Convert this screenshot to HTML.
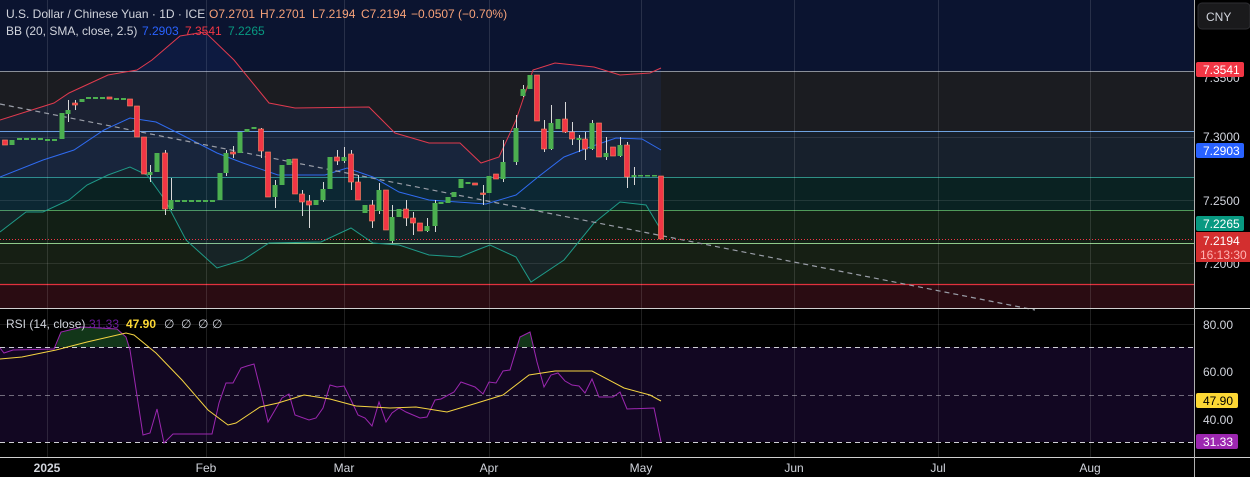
<!DOCTYPE html>
<html><head><meta charset="utf-8"><style>
html,body{margin:0;padding:0;background:#000;width:1250px;height:477px;overflow:hidden}
svg{display:block;font-family:"Liberation Sans",sans-serif}
</style></head><body>
<svg width="1250" height="477" viewBox="0 0 1250 477" xmlns="http://www.w3.org/2000/svg">
<rect width="1250" height="477" fill="#000"/>
<!-- main pane bands -->
<rect x="0" y="0" width="1195" height="71" fill="#0b1430"/>
<rect x="0" y="71" width="1195" height="60" fill="#1b1c21"/>
<rect x="0" y="131" width="1195" height="46" fill="#17202c"/>
<rect x="0" y="177" width="1195" height="33" fill="#0a2222"/>
<rect x="0" y="210" width="1195" height="33" fill="#121f15"/>
<rect x="0" y="243" width="1195" height="41" fill="#161f14"/>
<rect x="0" y="284" width="1195" height="24" fill="#2a0c12"/>
<line x1="0" y1="71.5" x2="1195" y2="71.5" stroke="#8a8f99" stroke-width="1"/>
<line x1="0" y1="131.5" x2="1195" y2="131.5" stroke="#6fa3e0" stroke-width="1"/>
<line x1="0" y1="177.5" x2="1195" y2="177.5" stroke="#2f8f85" stroke-width="1"/>
<line x1="0" y1="210.5" x2="1195" y2="210.5" stroke="#4f9a5a" stroke-width="1"/>
<line x1="0" y1="243.5" x2="1195" y2="243.5" stroke="#8fc98a" stroke-width="1"/>
<line x1="0" y1="284.5" x2="1195" y2="284.5" stroke="#e0313d" stroke-width="1.2"/>
<!-- horizontal grid -->
<g stroke="#ffffff" stroke-opacity="0.1">
<line x1="0" y1="137.5" x2="1195" y2="137.5"/><line x1="0" y1="200.5" x2="1195" y2="200.5"/><line x1="0" y1="263.5" x2="1195" y2="263.5"/>
<line x1="0" y1="371.5" x2="1195" y2="371.5"/><line x1="0" y1="419.5" x2="1195" y2="419.5"/><line x1="0" y1="324.5" x2="1195" y2="324.5"/>
</g>
<!-- RSI band -->
<rect x="0" y="347" width="1195" height="95" fill="#120722"/>
<g stroke="#cfcfd6" stroke-dasharray="5,4" stroke-width="1">
<line x1="0" y1="347.5" x2="1195" y2="347.5"/><line x1="0" y1="395.5" x2="1195" y2="395.5" stroke-opacity="0.5"/><line x1="0" y1="442.5" x2="1195" y2="442.5"/>
</g>
<!-- vertical grid -->
<g stroke="#ffffff" stroke-opacity="0.12">
<line x1="47.5" y1="0" x2="47.5" y2="457"/><line x1="206.5" y1="0" x2="206.5" y2="457"/><line x1="344.5" y1="0" x2="344.5" y2="457"/>
<line x1="489.5" y1="0" x2="489.5" y2="457"/><line x1="641.5" y1="0" x2="641.5" y2="457"/><line x1="794.5" y1="0" x2="794.5" y2="457"/>
<line x1="938.5" y1="0" x2="938.5" y2="457"/><line x1="1090.5" y1="0" x2="1090.5" y2="457"/>
</g>
<!-- BB fill -->
<polygon fill="#2962ff" fill-opacity="0.08" points="0,120 54,103 69,93 108,75 137,70 152,60 180,36 205,32 234,60 269,103 295,108 369,107 395,133 429,143 460,143 481,163 499,157 516,120 533,70 555,63 594,67 620,75 650,73 661,68 661,230 646,205 620,202 594,223 564,260 531,282 516,257 490,245 477,250 460,257 429,255 399,245 373,243 351,228 321,242 269,243 243,260 217,268 186,240 165,200 147,175 130,167 108,175 87,185 69,200 43,212 26,212 0,232"/>
<polyline fill="none" stroke="#e03a4e" stroke-width="1" points="0,120 54,103 69,93 108,75 137,70 152,60 180,36 205,32 234,60 269,103 295,108 369,107 395,133 429,143 460,143 481,163 499,157 516,120 533,70 555,63 594,67 620,75 650,73 661,68"/>
<polyline fill="none" stroke="#2f6bf0" stroke-width="1" points="0,177 43,160 74,150 104,130 130,118 156,122 182,135 217,153 243,163 278,175 325,175 347,168 373,177 399,192 429,200 486,204 516,195 538,177 564,157 590,147 616,138 642,139 661,150"/>
<polyline fill="none" stroke="#1f9a88" stroke-width="1" points="0,232 26,212 43,212 69,200 87,185 108,175 130,167 147,175 165,200 186,240 217,268 243,260 269,243 321,242 351,228 373,243 399,245 429,255 460,257 477,250 490,245 516,257 531,282 564,260 594,223 620,202 646,205 661,230"/>
<!-- trend line -->
<line x1="0" y1="104" x2="1035" y2="310" stroke="#9a9ea8" stroke-width="1.2" stroke-dasharray="5,4"/>
<!-- current price dotted -->
<line x1="0" y1="239.5" x2="1195" y2="239.5" stroke="#f23645" stroke-dasharray="1,2" stroke-width="1"/>
<!-- wicks -->
<g stroke="#d8d8d8" stroke-width="1">
<line x1="68.5" y1="100" x2="68.5" y2="122"/><line x1="75.5" y1="100" x2="75.5" y2="110"/><line x1="150.5" y1="165" x2="150.5" y2="182"/>
<line x1="165.5" y1="150" x2="165.5" y2="215"/><line x1="171.5" y1="178" x2="171.5" y2="210"/><line x1="226.5" y1="150" x2="226.5" y2="176"/>
<line x1="233.5" y1="146" x2="233.5" y2="158"/><line x1="261.5" y1="128" x2="261.5" y2="158"/><line x1="275.5" y1="180" x2="275.5" y2="208"/>
<line x1="302.5" y1="190" x2="302.5" y2="216"/><line x1="309.5" y1="195" x2="309.5" y2="228"/><line x1="323.5" y1="182" x2="323.5" y2="202"/>
<line x1="337.5" y1="150" x2="337.5" y2="165"/><line x1="344.5" y1="147" x2="344.5" y2="163"/><line x1="351.5" y1="150" x2="351.5" y2="190"/>
<line x1="358.5" y1="175" x2="358.5" y2="200"/><line x1="372.5" y1="200" x2="372.5" y2="228"/><line x1="379.5" y1="183" x2="379.5" y2="214"/>
<line x1="392.5" y1="205" x2="392.5" y2="243"/><line x1="406.5" y1="200" x2="406.5" y2="226"/><line x1="413.5" y1="212" x2="413.5" y2="235"/>
<line x1="427.5" y1="218" x2="427.5" y2="232"/><line x1="435.5" y1="200" x2="435.5" y2="232"/><line x1="483.5" y1="185" x2="483.5" y2="205"/>
<line x1="503.5" y1="140" x2="503.5" y2="182"/><line x1="516.5" y1="115" x2="516.5" y2="165"/><line x1="523.5" y1="85" x2="523.5" y2="97"/>
<line x1="544.5" y1="120" x2="544.5" y2="152"/><line x1="551.5" y1="105" x2="551.5" y2="150"/><line x1="565.5" y1="102" x2="565.5" y2="133"/>
<line x1="572.5" y1="122" x2="572.5" y2="145"/><line x1="579.5" y1="135" x2="579.5" y2="152"/><line x1="585.5" y1="132" x2="585.5" y2="160"/>
<line x1="592.5" y1="120" x2="592.5" y2="150"/><line x1="606.5" y1="137" x2="606.5" y2="160"/><line x1="620.5" y1="137" x2="620.5" y2="157"/>
<line x1="627.5" y1="142" x2="627.5" y2="188"/><line x1="634.5" y1="167" x2="634.5" y2="185"/>
</g>
<!-- candles -->
<g fill="#4caf50">
<rect x="9.5" y="140" width="5" height="5"/>
<rect x="17" y="138" width="5" height="2"/><rect x="24" y="138" width="5" height="2"/><rect x="31" y="138" width="5" height="2"/><rect x="38" y="138" width="5" height="2"/><rect x="45" y="139" width="5" height="2"/><rect x="52" y="139" width="5" height="2"/>
<rect x="59.5" y="113" width="5" height="26"/><rect x="65.5" y="110" width="5" height="4"/><rect x="79.5" y="99" width="5" height="3"/>
<rect x="86" y="97" width="5" height="2"/><rect x="93" y="97" width="5" height="2"/><rect x="100" y="97" width="5" height="2"/><rect x="114" y="98" width="5" height="2"/><rect x="121" y="98" width="5" height="2"/>
<rect x="147.5" y="172" width="5" height="3"/><rect x="154.5" y="153" width="5" height="19"/><rect x="168.5" y="200" width="5" height="9"/>
<rect x="175" y="200" width="5" height="2"/><rect x="182" y="200" width="5" height="2"/><rect x="189" y="200" width="5" height="2"/><rect x="196" y="200" width="5" height="2"/><rect x="203" y="200" width="5" height="2"/><rect x="210" y="200" width="5" height="2"/>
<rect x="217.5" y="173" width="5" height="27"/><rect x="223.5" y="153" width="5" height="20"/><rect x="237.5" y="132" width="5" height="21"/><rect x="244.5" y="129" width="5" height="3"/><rect x="251.5" y="127" width="5" height="2"/>
<rect x="272.5" y="185" width="5" height="12"/><rect x="279.5" y="165" width="5" height="20"/><rect x="286.5" y="159" width="5" height="6"/>
<rect x="313.5" y="200" width="5" height="5"/><rect x="320.5" y="189" width="5" height="11"/><rect x="327.5" y="157" width="5" height="32"/><rect x="341.5" y="157" width="5" height="4"/>
<rect x="362.5" y="205" width="5" height="8"/><rect x="376.5" y="190" width="5" height="21"/><rect x="389.5" y="217" width="5" height="24"/><rect x="396.5" y="209" width="5" height="8"/>
<rect x="424.5" y="226" width="5" height="5"/><rect x="432.5" y="203" width="5" height="23"/><rect x="438.5" y="202" width="5" height="2"/><rect x="445.5" y="197" width="5" height="6"/><rect x="451.5" y="192" width="5" height="5"/>
<rect x="458.5" y="179" width="5" height="9"/><rect x="465.5" y="182" width="5" height="2"/><rect x="486.5" y="176" width="5" height="17"/><rect x="500.5" y="162" width="5" height="17"/>
<rect x="513.5" y="128" width="5" height="34"/><rect x="520.5" y="89" width="5" height="7"/><rect x="527.5" y="75" width="5" height="14"/>
<rect x="548.5" y="123" width="5" height="26"/><rect x="555.5" y="119" width="5" height="10"/><rect x="576.5" y="138" width="5" height="2"/><rect x="589.5" y="123" width="5" height="26"/>
<rect x="603.5" y="153" width="5" height="4"/><rect x="617.5" y="145" width="5" height="11"/><rect x="631.5" y="175" width="5" height="2"/>
<rect x="638" y="175" width="5" height="1.5"/><rect x="645" y="175" width="5" height="1.5"/><rect x="652" y="175" width="5" height="1.5"/>
</g>
<g fill="#f23645" stroke="#ff8a65" stroke-width="0.6">
<rect x="2.5" y="140" width="5" height="5"/><rect x="72.5" y="103" width="5" height="2"/><rect x="107" y="97" width="5" height="2"/>
<rect x="127.5" y="99" width="5" height="7"/><rect x="134.5" y="106" width="5" height="31"/><rect x="141.5" y="137" width="5" height="37"/><rect x="162.5" y="153" width="5" height="56"/>
<rect x="230.5" y="152" width="5" height="2"/><rect x="258.5" y="129" width="5" height="22"/><rect x="265.5" y="152" width="5" height="45"/>
<rect x="292.5" y="159" width="5" height="35"/><rect x="299.5" y="194" width="5" height="8"/><rect x="306.5" y="201" width="5" height="4"/><rect x="334.5" y="157" width="5" height="4"/>
<rect x="348.5" y="154" width="5" height="28"/><rect x="355.5" y="182" width="5" height="18"/><rect x="369.5" y="205" width="5" height="16"/><rect x="383.5" y="190" width="5" height="40"/>
<rect x="403.5" y="209" width="5" height="9"/><rect x="410.5" y="218" width="5" height="5"/><rect x="417.5" y="223" width="5" height="8"/>
<rect x="472.5" y="183" width="5" height="2"/><rect x="480.5" y="193" width="5" height="1.5"/><rect x="493.5" y="174" width="5" height="5"/>
<rect x="534.5" y="75" width="5" height="46"/><rect x="541.5" y="129" width="5" height="20"/><rect x="562.5" y="119" width="5" height="13"/><rect x="569.5" y="132" width="5" height="7"/>
<rect x="582.5" y="139" width="5" height="10"/><rect x="596.5" y="123" width="5" height="34"/><rect x="610.5" y="147" width="5" height="9"/><rect x="624.5" y="145" width="5" height="32"/>
<rect x="658.5" y="176" width="5" height="63"/>
</g>
<!-- RSI -->
<polygon fill="#1e5a2a" fill-opacity="0.6" points="56,347 61,332 82,327 117,329 126,337 130,347"/>
<polygon fill="#1e5a2a" fill-opacity="0.6" points="516,347 520,337 530,332 534,347"/>
<polyline fill="none" stroke="#9c27b0" stroke-width="1" points="0,348 4,353 13,350 54,349 61,332 82,327 117,329 126,337 130,350 143,435 150,433 157,409 164,443 173,434 212,434 219,403 226,383 233,383 241,368 247,366 254,364 261,392 268,422 275,410 282,398 289,394 295,415 309,420 316,418 323,408 330,385 337,387 344,386 351,400 358,415 365,418 372,426 379,402 386,422 392,413 399,408 406,412 420,418 427,417 435,400 441,399 454,392 461,382 475,387 483,394 489,382 496,383 503,371 510,370 520,337 530,332 537,362 544,387 551,375 558,373 565,381 572,385 579,386 585,393 592,379 599,397 613,397 620,392 627,409 654,408 661,442"/>
<polyline fill="none" stroke="#f5d442" stroke-width="1" points="0,359 22,357 56,350 87,342 126,333 134,335 156,353 182,380 208,410 228,425 236,423 260,407 278,403 304,395 330,399 356,406 390,408 416,407 447,412 477,403 503,395 529,375 555,371 592,371 624,388 650,395 661,401"/>
<!-- separators -->
<line x1="0" y1="308.5" x2="1250" y2="308.5" stroke="#d0d0d0" stroke-width="1"/>
<line x1="0" y1="457.5" x2="1250" y2="457.5" stroke="#d0d0d0" stroke-width="1"/>
<line x1="1194.5" y1="0" x2="1194.5" y2="477" stroke="#d0d0d0" stroke-width="1"/>
<rect x="1195" y="0" width="55" height="308" fill="#000"/>
<rect x="1195" y="309" width="55" height="148" fill="#000"/>
<rect x="1195" y="458" width="55" height="19" fill="#000"/>
<line x1="0" y1="308.5" x2="1250" y2="308.5" stroke="#d0d0d0" stroke-width="1"/>
<line x1="1194.5" y1="0" x2="1194.5" y2="477" stroke="#b0b0b0" stroke-width="1"/>
<!-- header -->
<g font-size="12">
<text x="6" y="18" fill="#d1d4dc">U.S. Dollar / Chinese Yuan · 1D · ICE</text>
<g fill="#f7a27a"><text x="209" y="18">O7.2701</text><text x="260" y="18">H7.2701</text><text x="312" y="18">L7.2194</text><text x="361" y="18">C7.2194</text><text x="411" y="18">−0.0507 (−0.70%)</text></g>
<text x="6" y="35" fill="#d1d4dc">BB (20, SMA, close, 2.5)</text>
<text x="142" y="35" fill="#2962ff">7.2903</text><text x="185" y="35" fill="#f23645">7.3541</text><text x="228" y="35" fill="#089981">7.2265</text>
<text x="6" y="328" fill="#d1d4dc">RSI (14, close)</text>
<text x="89" y="328" fill="#6a1b9a">31.33</text><text x="126" y="328" fill="#fdd835" font-weight="bold">47.90</text>
<text x="164" y="328" fill="#d1d4dc">∅</text><text x="181" y="328" fill="#d1d4dc">∅</text><text x="198" y="328" fill="#d1d4dc">∅</text><text x="212" y="328" fill="#d1d4dc">∅</text>
</g>
<!-- right scale -->
<rect x="1198" y="3" width="52" height="26" rx="4" fill="#1a1a1c" stroke="#2e2e32"/>
<text x="1206" y="21" font-size="12" fill="#d1d4dc">CNY</text>
<g font-size="12">
<text x="1203" y="82" fill="#d1d4dc">7.3500</text>
<text x="1203" y="141" fill="#d1d4dc">7.3000</text>
<text x="1203" y="205" fill="#d1d4dc">7.2500</text>
<text x="1203" y="268" fill="#d1d4dc">7.2000</text>
<rect x="1196" y="62" width="48" height="15" rx="2" fill="#f23645"/><text x="1203" y="74" fill="#fff">7.3541</text>
<rect x="1196" y="143" width="48" height="15" rx="2" fill="#2962ff"/><text x="1203" y="155" fill="#fff">7.2903</text>
<rect x="1196" y="216" width="48" height="15" rx="2" fill="#089981"/><text x="1203" y="228" fill="#fff">7.2265</text>
<rect x="1196" y="232" width="54" height="30" fill="#d32f2f"/><text x="1203" y="245" fill="#fff">7.2194</text><text x="1200" y="259" fill="#ffb3b3">16:13:30</text>
<text x="1203" y="329" fill="#d1d4dc">80.00</text>
<text x="1203" y="376" fill="#d1d4dc">60.00</text>
<rect x="1196" y="393" width="42" height="15" rx="2" fill="#fdd835"/><text x="1203" y="405" fill="#000">47.90</text>
<text x="1203" y="424" fill="#d1d4dc">40.00</text>
<rect x="1196" y="434" width="42" height="15" rx="2" fill="#9c27b0"/><text x="1203" y="446" fill="#fff">31.33</text>
</g>
<!-- time axis -->
<g font-size="12" fill="#d1d4dc" text-anchor="middle">
<text x="47" y="472" font-weight="bold">2025</text><text x="206" y="472">Feb</text><text x="344" y="472">Mar</text><text x="489" y="472">Apr</text>
<text x="641" y="472">May</text><text x="794" y="472">Jun</text><text x="938" y="472">Jul</text><text x="1090" y="472">Aug</text>
</g>
</svg>
</body></html>
